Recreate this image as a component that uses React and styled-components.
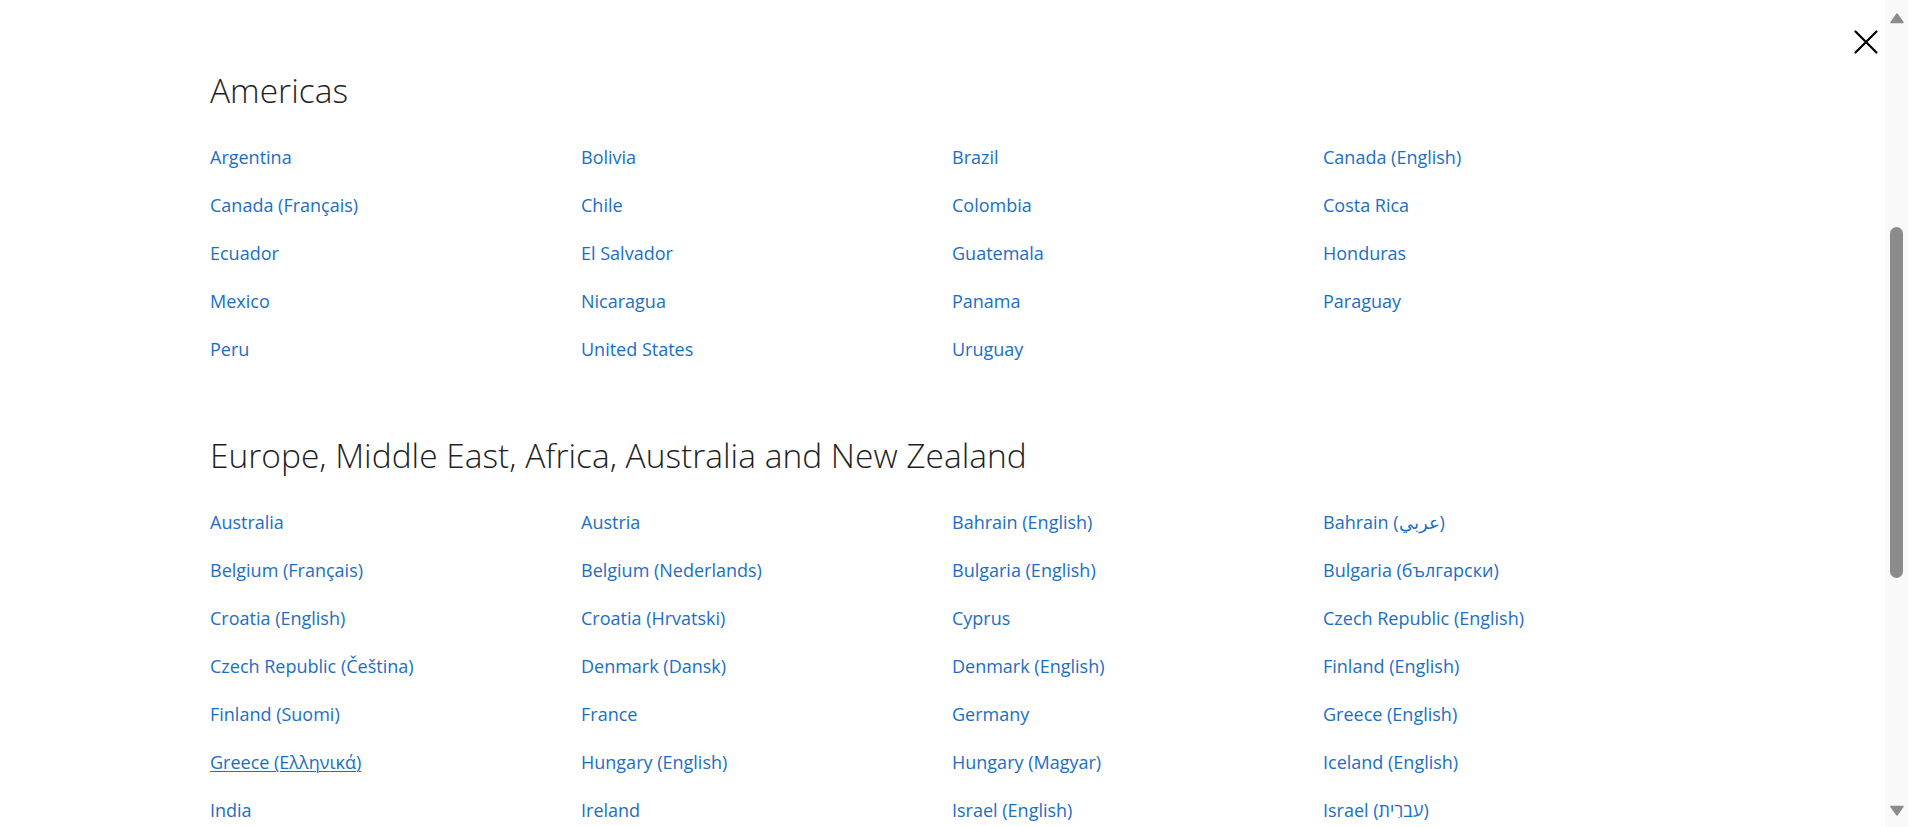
import React from 'react'
import styled, { createGlobalStyle } from 'styled-components'

const GlobalStyle = createGlobalStyle`
	html, body {
		margin: 0;
		padding: 0;
		background: #fff;
		overflow: hidden;
		font-family: "Open Sans", "Liberation Sans", Arial, sans-serif;
	}
`

const Overlay = styled.div`
	position: fixed;
	inset: 0 23px 0 0;
	background: #fff;
	overflow: hidden;
	padding: 70px 0 0 210px;
	box-sizing: border-box;
`

// the page scrollbar, as the browser draws it
const ScrollTrack = styled.div`
	position: fixed;
	top: 0;
	right: 0;
	bottom: 0;
	width: 23px;
	background: #f9f9f9;
	display: flex;
	flex-direction: column;
	align-items: center;
	z-index: 2;
`

const ArrowBox = styled.div`
	flex: none;
	width: 14px;
	height: 11px;
	margin-top: ${p => (p.$down ? 'auto' : '13px')};
	margin-bottom: ${p => (p.$down ? '11px' : '0')};
	svg {
		display: block;
	}
`

const ScrollThumb = styled.div`
	flex: none;
	width: 13px;
	height: 351px;
	margin-top: 203px;
	border-radius: 6.5px;
	background: #8b8b8b;
`

const CloseButton = styled.button`
	position: absolute;
	top: 30px;
	right: 7px;
	width: 24px;
	height: 24px;
	padding: 0;
	border: 0;
	background: none;
	cursor: pointer;
	svg {
		display: block;
	}
`

const Region = styled.section`
	margin-bottom: 74px;
`

const RegionTitle = styled.h2`
	margin: 0 0 35px;
	font-family: "Open Sans", "Liberation Sans", sans-serif;
	font-weight: 300;
	font-size: 33.5px;
	line-height: 40px;
	color: #1f1f1f;
`

const CountryGrid = styled.ul`
	list-style: none;
	margin: 0;
	padding: 0;
	display: grid;
	grid-template-columns: repeat(4, 371px);
	row-gap: 24px;
`

const Country = styled.li`
	margin: 0;
`

const CountryLink = styled.a`
	font-family: "Open Sans", "Liberation Sans", "Noto Sans", sans-serif;
	font-size: 18px;
	line-height: 24px;
	color: #1b6ec5;
	text-decoration: ${p => (p.$hover ? 'underline' : 'none')};
	text-underline-offset: 2px;
	text-decoration-thickness: 1px;
	white-space: nowrap;
	&:hover {
		text-decoration: underline;
	}
`

const regions = [
	{
		name: 'Americas',
		countries: [
			'Argentina', 'Bolivia', 'Brazil', 'Canada (English)',
			'Canada (Français)', 'Chile', 'Colombia', 'Costa Rica',
			'Ecuador', 'El Salvador', 'Guatemala', 'Honduras',
			'Mexico', 'Nicaragua', 'Panama', 'Paraguay',
			'Peru', 'United States', 'Uruguay'
		]
	},
	{
		name: 'Europe, Middle East, Africa, Australia and New Zealand',
		countries: [
			'Australia', 'Austria', 'Bahrain (English)', 'Bahrain (عربي)',
			'Belgium (Français)', 'Belgium (Nederlands)', 'Bulgaria (English)', 'Bulgaria (български)',
			'Croatia (English)', 'Croatia (Hrvatski)', 'Cyprus', 'Czech Republic (English)',
			'Czech Republic (Čeština)', 'Denmark (Dansk)', 'Denmark (English)', 'Finland (English)',
			'Finland (Suomi)', 'France', 'Germany', 'Greece (English)',
			'Greece (Ελληνικά)', 'Hungary (English)', 'Hungary (Magyar)', 'Iceland (English)',
			'India', 'Ireland', 'Israel (English)', 'Israel (עברִית)'
		]
	}
]

const CloseIcon = () => (
	<svg width="24" height="24" viewBox="0 0 24 24" fill="none" stroke="#000" strokeWidth="2.2" strokeLinecap="round">
		<path d="M1.5 1.5 L22.5 22.5 M22.5 1.5 L1.5 22.5" />
	</svg>
)

const ScrollArrow = ({ down }) => (
	<ArrowBox $down={down}>
		<svg width="14" height="11" viewBox="0 0 14 11">
			<path
				d={down ? 'M1 1.5 H13 L7 10 Z' : 'M7 1 L13 9.5 H1 Z'}
				fill="#8c8c8c"
				stroke="#8c8c8c"
				strokeWidth="1.5"
				strokeLinejoin="round"
			/>
		</svg>
	</ArrowBox>
)

export default function App() {
	return (
		<>
			<GlobalStyle />
			<Overlay>
				<CloseButton aria-label="Close">
					<CloseIcon />
				</CloseButton>
				{regions.map(({ name, countries }) => (
					<Region key={name}>
						<RegionTitle>{name}</RegionTitle>
						<CountryGrid>
							{countries.map(country => (
								<Country key={country}>
									<CountryLink href="#" $hover={country === 'Greece (Ελληνικά)'}>
										{country}
									</CountryLink>
								</Country>
							))}
						</CountryGrid>
					</Region>
				))}
			</Overlay>
			<ScrollTrack>
				<ScrollArrow />
				<ScrollThumb />
				<ScrollArrow down />
			</ScrollTrack>
		</>
	)
}
